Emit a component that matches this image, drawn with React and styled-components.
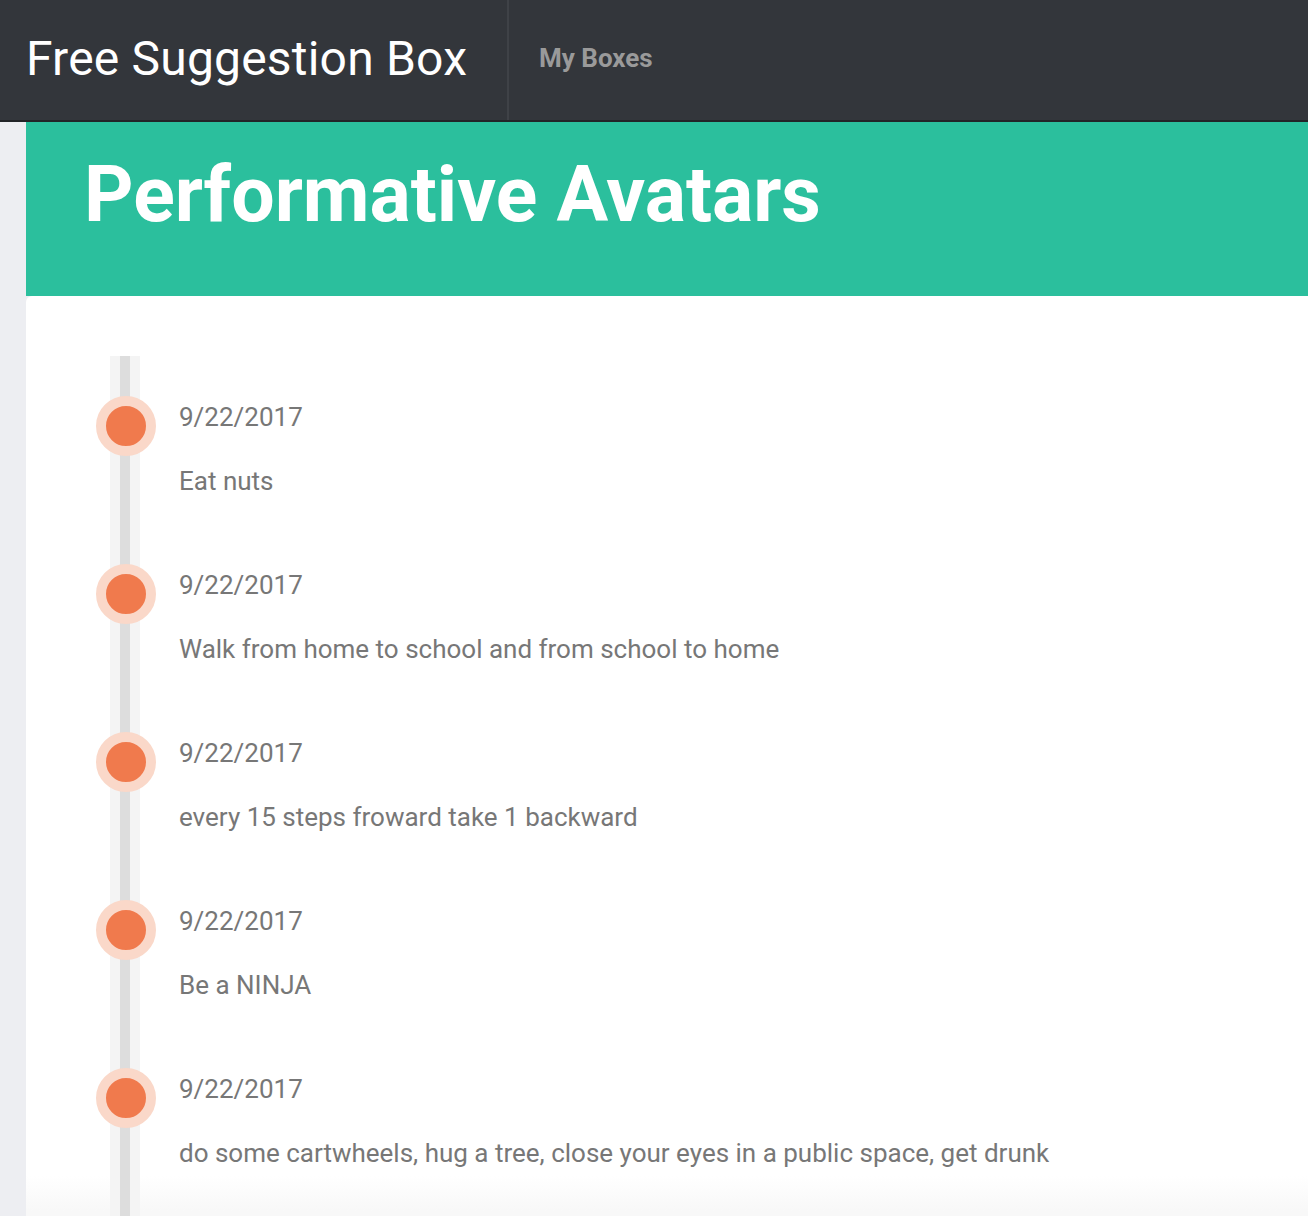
import React from 'react'
import styled, { createGlobalStyle } from 'styled-components'

const suggestions = [
  { date: '9/22/2017', text: 'Eat nuts' },
  { date: '9/22/2017', text: 'Walk from home to school and from school to home' },
  { date: '9/22/2017', text: 'every 15 steps froward take 1 backward' },
  { date: '9/22/2017', text: 'Be a NINJA' },
  { date: '9/22/2017', text: 'do some cartwheels, hug a tree, close your eyes in a public space, get drunk' },
]

const App = () => {
  return (
    <>
      <GlobalStyle />
      <Page>
        <NavBar>
          <Brand>Free Suggestion Box</Brand>
          <NavLink>My Boxes</NavLink>
        </NavBar>
        <Body>
          <SideStrip />
          <Main>
            <BoxHeader>
              <BoxTitle>Performative Avatars</BoxTitle>
            </BoxHeader>
            <Card>
              <Timeline>
                {suggestions.map((s, i) => (
                  <Item key={i}>
                    <Dot />
                    <ItemText>
                      <ItemDate>{s.date}</ItemDate>
                      <ItemBody>{s.text}</ItemBody>
                    </ItemText>
                  </Item>
                ))}
              </Timeline>
            </Card>
          </Main>
        </Body>
      </Page>
    </>
  )
}

export default App

// styled components

const GlobalStyle = createGlobalStyle`
  html, body {
    margin: 0;
    padding: 0;
    background: #edeef2;
    font-family: Roboto, "Liberation Sans", sans-serif;
    overflow: hidden;
  }
`

const Page = styled.div`
  display: flex;
  flex-direction: column;
  min-height: 1216px;
`

const NavBar = styled.nav`
  display: flex;
  align-items: stretch;
  height: 120px;
  background: #33363b;
  border-bottom: 2px solid #222428;
`

const Brand = styled.div`
  display: flex;
  align-items: center;
  box-sizing: border-box;
  width: 509px;
  padding: 0 0 4px 26px;
  font-size: 48px;
  letter-spacing: 0.2px;
  color: #ffffff;
  border-right: 2px solid #3f4247;
`

const NavLink = styled.a`
  display: flex;
  align-items: center;
  padding: 0 0 4px 30px;
  font-size: 26px;
  font-weight: 700;
  color: #9a9a9a;
`

const Body = styled.div`
  display: flex;
  flex: 1;
`

const SideStrip = styled.div`
  width: 26px;
  flex-shrink: 0;
  background: #edeef2;
`

const Main = styled.div`
  flex: 1;
  display: flex;
  flex-direction: column;
`

const BoxHeader = styled.header`
  height: 174px;
  background: #2bbf9d;
  display: flex;
  align-items: center;
  padding-left: 58px;
  padding-bottom: 28px;
  box-sizing: border-box;
`

const BoxTitle = styled.h1`
  margin: 0;
  font-size: 77px;
  font-weight: 700;
  color: #ffffff;
`

const Card = styled.section`
  flex: 1;
  background: #ffffff;
  border-top-left-radius: 6px;
  padding: 60px 0 0 70px;
  background-image: linear-gradient(to bottom, #ffffff 0, #ffffff 880px, #f8f8f8 915px);
`

const Timeline = styled.div`
  position: relative;
  padding-top: 40px;

  &::before {
    content: '';
    position: absolute;
    top: 0;
    bottom: -200px;
    left: 14px;
    width: 10px;
    background: #dddddd;
    border-left: 10px solid #f4f4f4;
    border-right: 10px solid #f4f4f4;
  }
`

const Item = styled.div`
  position: relative;
  display: flex;
  align-items: flex-start;
  gap: 23px;
  height: 168px;
`

const Dot = styled.div`
  width: 40px;
  height: 40px;
  flex-shrink: 0;
  border-radius: 50%;
  background: #f07a4d;
  border: 10px solid #fad8c9;
`

const ItemText = styled.div`
  display: flex;
  flex-direction: column;
  padding-top: 6px;
`

const ItemDate = styled.div`
  font-size: 26px;
  line-height: 31px;
  color: #777777;
`

const ItemBody = styled.div`
  margin-top: 33px;
  font-size: 26px;
  line-height: 31px;
  color: #777777;
`
